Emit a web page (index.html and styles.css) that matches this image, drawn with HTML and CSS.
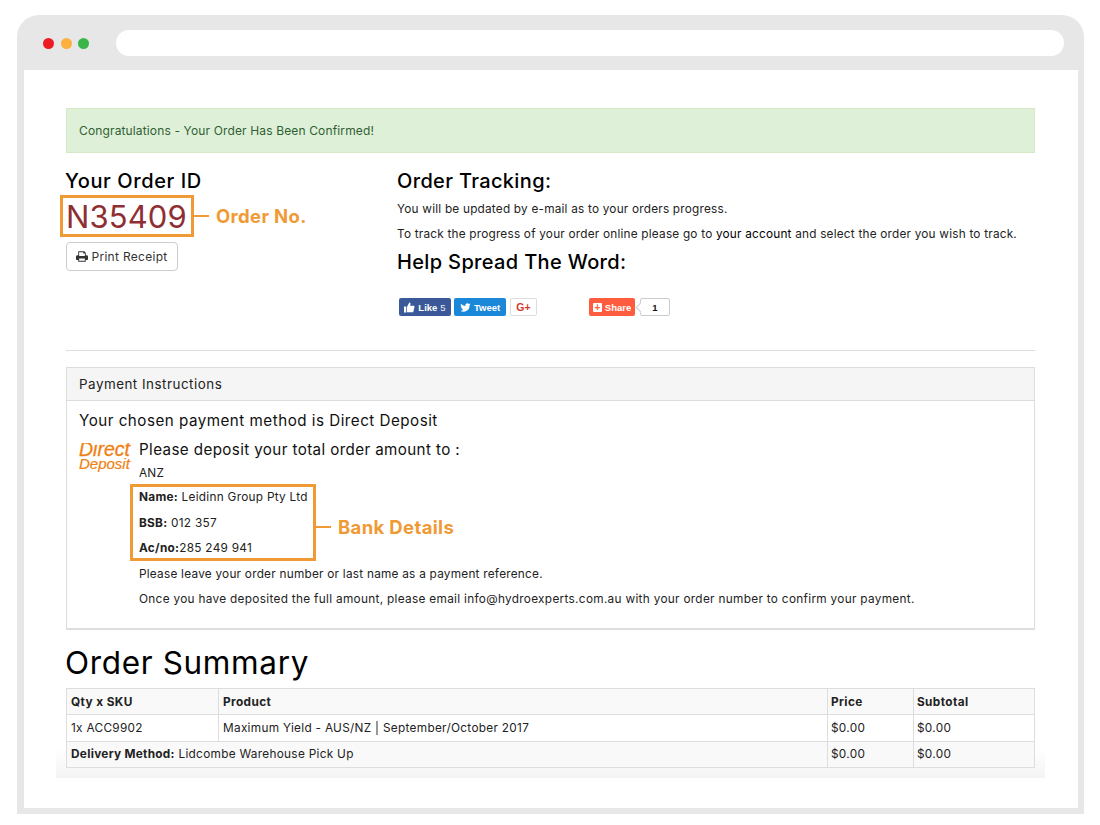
FILE: index.html
```html
<!DOCTYPE html>
<html lang="en">
<head>
<meta charset="utf-8">
<title>Order Confirmed</title>
<link rel="stylesheet" href="styles.css">
</head>
<body>
<div class="browser">
  <div class="topbar">
    <div class="dots"><span class="dot red"></span><span class="dot amber"></span><span class="dot green"></span></div>
    <div class="address"></div>
  </div>
  <main class="page">
    <div class="alert">Congratulations - Your Order Has Been Confirmed!</div>
    <div class="order-row">
      <section class="order-id">
        <h2 class="title">Your Order ID</h2>
        <div class="order-line">
          <div class="order-box">N35409</div>
          <span class="dash"></span>
          <span class="note">Order No.</span>
        </div>
        <button class="print" type="button">
          <svg class="print-icon" viewBox="0 0 16 14" aria-hidden="true"><path fill="#333" fill-rule="evenodd" d="M3 0h8l2 2v3.2h1.2c1 0 1.8.8 1.8 1.8v3.6c0 .5-.4.9-.9.9H13v2.5H3v-2.5H.9c-.5 0-.9-.4-.9-.9V7c0-1 .8-1.8 1.8-1.8H3V0zm1.2 1.2v5h7.6V3h-1.6a.6.6 0 0 1-.6-.6V1.200H4.200zm0 8.300v3.300h7.600V9.500H4.200z"/></svg>
          Print Receipt
        </button>
      </section>
      <section class="tracking">
        <h2 class="title">Order Tracking:</h2>
        <p class="line first">You will be updated by e-mail as to your orders progress.</p>
        <p class="line">To track the progress of your order online please go to <span class="dark">your account</span> and select the order you wish to track.</p>
        <h2 class="title spread">Help Spread The Word:</h2>
        <div class="social">
          <span class="sbtn like"><svg class="sicon" viewBox="0 0 12 12" aria-hidden="true"><path fill="#fff" d="M0 5h2.500v6.500H0zM3.300 5.200 5.800.5c.9 0 1.500.7 1.300 1.700l-.4 2h3.700c.8 0 1.200.7 1 1.300l-1.200 5c-.1.500-.5.800-1 .8H3.300z"/></svg>Like <span class="likes">5</span></span>
          <span class="sbtn tweet"><svg class="sicon" viewBox="0 0 24 24" aria-hidden="true"><path fill="#fff" d="M23 5c-.8.400-1.700.600-2.600.700.900-.600 1.700-1.400 2-2.500-.900.500-1.900.900-2.900 1.100A4.600 4.600 0 0 0 11.700 8.500C7.900 8.300 4.500 6.500 2.200 3.700c-1.200 2.100-.600 4.800 1.400 6.100-.700 0-1.400-.200-2-.600 0 2.200 1.600 4.100 3.700 4.600-.700.200-1.400.200-2.100.100.600 1.800 2.300 3.100 4.300 3.200A9.300 9.300 0 0 1 .700 19a13 13 0 0 0 20-11.600c.900-.600 1.700-1.400 2.300-2.400z"/></svg>Tweet</span>
          <span class="sbtn gplus">G+</span>
          <span class="sbtn share"><span class="plus">+</span>Share</span>
          <span class="count">1</span>
        </div>
      </section>
    </div>
    <hr class="rule">
    <section class="panel">
      <header class="panel-head">Payment Instructions</header>
      <div class="panel-body">
        <p class="chosen">Your chosen payment method is Direct Deposit</p>
        <div class="deposit">
          <div class="dd-logo"><span class="dd-top">Direct</span><span class="dd-bottom">Deposit</span></div>
          <div class="deposit-info">
            <p class="please">Please deposit your total order amount to :</p>
            <p class="line anz">ANZ</p>
            <div class="bank-line">
              <div class="bank-box">
                <p class="line"><b>Name:</b> Leidinn Group Pty Ltd</p>
                <p class="line"><b>BSB:</b> 012 357</p>
                <p class="line"><b>Ac/no:</b>285 249 941</p>
              </div>
              <span class="dash"></span>
              <span class="note">Bank Details</span>
            </div>
            <p class="line ref">Please leave your order number or last name as a payment reference.</p>
            <p class="line">Once you have deposited the full amount, please email info@hydroexperts.com.au with your order number to confirm your payment.</p>
          </div>
        </div>
      </div>
    </section>
    <h1 class="summary">Order Summary</h1>
    <div class="fade">
      <table class="items">
        <colgroup><col class="c1"><col class="c2"><col class="c3"><col class="c4"></colgroup>
        <thead>
          <tr><th>Qty x SKU</th><th>Product</th><th>Price</th><th>Subtotal</th></tr>
        </thead>
        <tbody>
          <tr><td>1x ACC9902</td><td>Maximum Yield - AUS/NZ | September/October 2017</td><td>$0.00</td><td>$0.00</td></tr>
          <tr class="alt"><td colspan="2"><b>Delivery Method:</b> Lidcombe Warehouse Pick Up</td><td>$0.00</td><td>$0.00</td></tr>
        </tbody>
      </table>
    </div>
  </main>
</div>
</body>
</html>
```
FILE: styles.css
```css
* { box-sizing: border-box; }
html, body { margin: 0; padding: 0; background: #fff; }
body { font-family: Inter, "Noto Sans", sans-serif; color: #222; width: 1100px; height: 825px; overflow: hidden; }
p, h1, h2 { margin: 0; font-weight: 400; }

.browser { width: 1067px; height: 799px; margin: 15px 0 0 17px; background: #e7e7e7; border-radius: 22px 22px 0 0; padding: 0 6px 6px 7px; display: flex; flex-direction: column; }
.topbar { height: 55px; flex: none; display: flex; align-items: center; }
.dots { display: flex; gap: 6.500px; margin-left: 19px; width: 73px; margin-top: 1px; }
.dot { width: 11px; height: 11px; border-radius: 50%; }
.red { background: #ed1c24; }
.amber { background: #fbb040; }
.green { background: #39b54a; }
.address { width: 948px; height: 26px; background: #fff; border-radius: 13px; margin-top: 1px; }

.page { flex: 1; background: #fff; padding: 38px 43px 0 42px; }
.alert { height: 45px; background: #dff0d8; border: 1px solid #d6e9c6; padding: 0 12px; display: flex; align-items: center; color: #2f5f33; font-size: 12px; letter-spacing: .14px; }

.order-row { display: flex; margin-top: 15px; }
.order-id { width: 331px; flex: none; }
.title { font-size: 20px; font-weight: 500; line-height: 26px; color: #000; letter-spacing: .35px; white-space: nowrap; }
.order-id .title { letter-spacing: .6px; margin-left: -1px; }
.order-line { display: flex; align-items: center; margin: 1px 0 5px -6px; }
.order-box { width: 134px; height: 42px; border: 3px solid #f09a36; color: #8e2f33; font-size: 31px; letter-spacing: .1px; display: flex; align-items: center; padding-left: 3px; }
.dash { width: 15px; height: 2px; background: #f09a36; flex: none; }
.note { color: #f09a36; font-weight: 700; font-size: 18.500px; letter-spacing: .35px; margin-left: 7px; white-space: nowrap; }
.print { width: 112px; height: 29px; background: #fff; border: 1px solid #ccc; border-radius: 4px; font: 400 12px Inter, "Noto Sans", sans-serif; letter-spacing: .3px; color: #333; display: flex; align-items: center; justify-content: center; gap: 3px; padding: 0; }
.print-icon { width: 12px; height: 11px; }

.tracking { flex: 1; }
.line { font-size: 11.800px; line-height: 16px; color: #222; letter-spacing: .21px; white-space: nowrap; }
.first { margin-top: 7px; }
.tracking .line + .line { margin-top: 9px; }
.dark { color: #000; }
.spread { margin-top: 7px; }
.social { display: flex; align-items: center; margin: 23px 0 0 2px; height: 18px; }
.sbtn { height: 18px; border-radius: 2px; display: flex; align-items: center; justify-content: center; color: #fff; font: 700 9.500px "Liberation Sans", sans-serif; flex: none; }
.sicon { width: 11px; height: 11px; margin-right: 3px; }
.like { width: 52px; background: #3b5998; }
.likes { font-weight: 400; margin-left: 3px; opacity: .9; }
.tweet { width: 52px; background: #1b87d8; margin-left: 3px; }
.gplus { width: 27px; background: #fff; border: 1px solid #ddd; color: #d23b2e; margin-left: 4px; font-size: 10.500px; }
.share { width: 46px; background: #ff5b3e; margin-left: 52px; }
.plus { width: 9px; height: 9px; background: #fff; color: #ff5b3e; border-radius: 1px; margin-right: 3px; display: flex; align-items: center; justify-content: center; font-size: 10px; line-height: 9px; }
.count { position: relative; width: 30px; height: 18px; margin-left: 5px; border: 1px solid #ccc; border-radius: 2px; background: #fff; font: 700 9.500px "Liberation Sans", sans-serif; color: #111; display: flex; align-items: center; justify-content: center; }
.count::before { content: ""; position: absolute; left: -4px; top: 5px; width: 6px; height: 6px; background: #fff; border-left: 1px solid #ccc; border-bottom: 1px solid #ccc; transform: rotate(45deg); }

.rule { margin: 34px 0 0; border: 0; border-top: 1px solid #ddd; }

.panel { margin-top: 16px; height: 263px; border: 1px solid #ddd; border-bottom-width: 2px; }
.panel-head { height: 33px; background: #f5f5f5; border-bottom: 1px solid #ddd; padding: 0 12px; display: flex; align-items: center; font-size: 13.400px; letter-spacing: .5px; color: #222; }
.panel-body { padding: 10px 12px 0; }
.chosen { font-size: 15.200px; line-height: 20px; letter-spacing: .49px; color: #111; }
.deposit { display: flex; margin-top: 9px; }
.dd-logo { width: 60px; flex: none; display: flex; flex-direction: column; margin-top: 2px; font-family: "Liberation Sans", sans-serif; font-style: italic; font-weight: 400; color: #f07f13; }
.dd-top { font-size: 19.500px; line-height: 14px; clip-path: inset(1px 0 -4px 0); -webkit-text-stroke: .3px #f07f13; }
.dd-bottom { font-size: 15px; line-height: 15px; -webkit-text-stroke: .2px #f07f13; }
.deposit-info { flex: 1; }
.please { font-size: 15.200px; line-height: 20px; letter-spacing: .38px; color: #111; }
.anz { margin-top: 5px; }
.bank-line { display: flex; align-items: center; margin: 3px 0 4px -9px; }
.bank-box { width: 186px; height: 77px; border: 3px solid #f09a36; padding: 2px 0 0 6px; display: flex; flex-direction: column; gap: 9.500px; flex: none; }
.bank-box .line { letter-spacing: .28px; }
.bank-line .dash, .bank-line .note { margin-top: 8px; }
.ref { margin-top: 5px; letter-spacing: .24px; }
.ref + .line { margin-top: 9.300px; letter-spacing: .31px; }

.summary { font-size: 31.500px; font-weight: 400; line-height: 40px; color: #000; letter-spacing: .65px; margin: 13px 0 0 -1px; white-space: nowrap; }
.fade { margin: 5px -10px 0; padding: 0 10px 10px; background: linear-gradient(to bottom, #fff 60px, #f4f4f4 100%); }
.items { width: 968px; border-collapse: collapse; table-layout: fixed; font-size: 11.800px; letter-spacing: .3px; background: #fff; }
.c1 { width: 152px; }
.c2 { width: 609px; }
.c3 { width: 86px; }
.c4 { width: 121px; }
.items th, .items td { border: 1px solid #ddd; height: 26.300px; padding: 0 4px; text-align: left; color: #222; white-space: nowrap; }
.items th:nth-last-child(-n+2), .items td:nth-last-child(-n+2) { padding-left: 3px; }
.items th { background: #f9f9f9; font-weight: 700; letter-spacing: .4px; }
.alt td { background: #f9f9f9; }
```
